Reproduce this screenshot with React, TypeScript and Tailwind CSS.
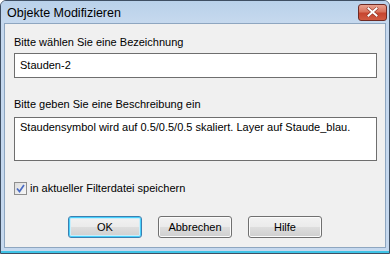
import React from 'react';

function CloseButton() {
  return (
    <div className="w-[29px] h-[17px] shrink-0 rounded-[3px] border border-[#6e2a24] bg-[linear-gradient(to_bottom,#e8a290_0%,#d9735d_45%,#c7452f_55%,#d15b42_100%)] flex items-center justify-center">
      <svg width="13" height="10" viewBox="0 0 13 10">
        <path d="M2.5 1.5 L10.5 8.5 M10.5 1.5 L2.5 8.5" stroke="#8a3426" strokeWidth="3" strokeLinecap="square" />
        <path d="M2.5 1.5 L10.5 8.5 M10.5 1.5 L2.5 8.5" stroke="#ffffff" strokeWidth="2" strokeLinecap="square" />
      </svg>
    </div>
  );
}

function DialogButton({ label, primary }: { label: string; primary?: boolean }) {
  return (
    <button
      className={`w-[74px] h-[22px] rounded-[3px] border text-[11px] text-black bg-[linear-gradient(to_bottom,#f2f2f2_0%,#ebebeb_48%,#dddddd_52%,#cfcfcf_100%)] ${
        primary
          ? 'border-[#3c7fb1] shadow-[inset_0_0_0_1px_#48d1fc,inset_0_0_0_2px_#c9eefb]'
          : 'border-[#707070] shadow-[inset_0_0_0_1px_#fbfbfb]'
      }`}
    >
      {label}
    </button>
  );
}

export default function App() {
  return (
    <div
      className="w-[390px] h-[254px] bg-[#c5d8ee] border border-[#3f4f63] rounded-t-[6px] overflow-hidden flex flex-col"
      style={{ fontFamily: '"Liberation Sans", Arial, sans-serif' }}
    >
      {/* Titelleiste */}
      <div className="h-[22px] shrink-0 flex items-center justify-between pl-[6px] pr-[2px] bg-[linear-gradient(to_bottom,#b9d1ea,#c6d9ee)]">
        <span className="text-[12.5px] text-black leading-none pt-[2px]">Objekte Modifizieren</span>
        <CloseButton />
      </div>

      {/* Rahmen */}
      <div className="flex-1 flex flex-col px-[3px] pb-[3px] bg-[#c5d8ee] border-b-[2px] border-[#3fc3e6]">
        <div className="flex-1 bg-[#f0f0f0] border border-[#8ea6c0] pl-[9px] pr-[8px] text-[11px] text-black">
          <div className="mt-[12px] h-[13px] leading-[13px]">Bitte wählen Sie eine Bezeichnung</div>
          <div className="mt-[4px] h-[25px] bg-white border border-[#6e6e6e] flex items-center px-[5px] leading-none">
            Stauden-2
          </div>
          <div className="mt-[20px] h-[13px] leading-[13px]">Bitte geben Sie eine Beschreibung ein</div>
          <div className="mt-[6px] h-[44px] bg-white border border-[#6e6e6e] px-[5px] pt-[3px] leading-[13px]">
            Staudensymbol wird auf 0.5/0.5/0.5 skaliert. Layer auf Staude_blau.
          </div>
          <div className="mt-[21px] h-[13px] flex items-center gap-[3px]">
            <div className="w-[13px] h-[13px] border border-[#8f8f8f] bg-[linear-gradient(135deg,#dcdcdc,#f8f8f8)] flex items-center justify-center">
              <svg width="9" height="9" viewBox="0 0 9 9">
                <path d="M1 4.5 L3.5 7.5 L8 1" fill="none" stroke="#4a6cc4" strokeWidth="1.7" />
              </svg>
            </div>
            <span className="leading-[13px]">in aktueller Filterdatei speichern</span>
          </div>
          <div className="mt-[21px] flex justify-center gap-[16px] pr-[1px]">
            <DialogButton label="OK" primary />
            <DialogButton label="Abbrechen" />
            <DialogButton label="Hilfe" />
          </div>
        </div>
      </div>
    </div>
  );
}
